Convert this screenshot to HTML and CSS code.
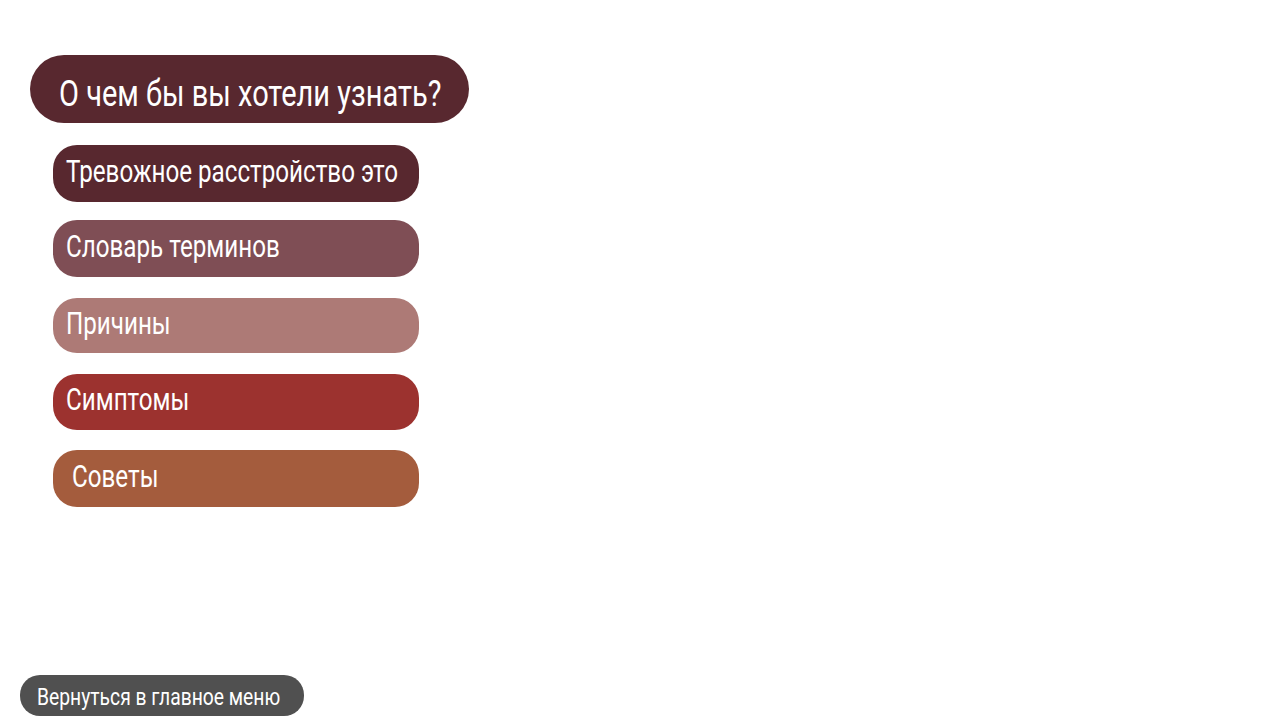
FILE: index.html
```html
<!DOCTYPE html>
<html lang="ru">
<head>
<meta charset="utf-8">
<title>Меню</title>
<link rel="stylesheet" href="styles.css">
</head>
<body>
<div class="page">
  <div class="menu">
    <div class="title"><span class="txt">О чем бы вы хотели узнать?</span></div>
    <div class="list">
      <div class="item c1"><span class="txt">Тревожное расстройство это</span></div>
      <div class="item c2"><span class="txt">Словарь терминов</span></div>
      <div class="item c3"><span class="txt">Причины</span></div>
      <div class="item c4"><span class="txt">Симптомы</span></div>
      <div class="item c5 indent"><span class="txt">Советы</span></div>
    </div>
  </div>
  <div class="back"><span class="txt">Вернуться в главное меню</span></div>
</div>
</body>
</html>
```
FILE: styles.css
```css
html, body {
  margin: 0;
  padding: 0;
  background: #ffffff;
}
.page {
  height: 726px;
  display: flex;
  flex-direction: column;
  font-family: Roboto, "Noto Sans", sans-serif;
  font-weight: 400;
  color: #ffffff;
}
.txt {
  display: inline-block;
  white-space: nowrap;
}
.menu {
  display: flex;
  flex-direction: column;
  padding: 55px 0 0 30px;
}
.title {
  width: 439px;
  height: 68px;
  box-sizing: border-box;
  border-radius: 34px;
  background: #58282f;
  display: flex;
  align-items: center;
  padding-left: 29px;
  font-size: 29px;
}
.title .txt {
  transform: translateY(4px) scaleY(1.28);
}
.list {
  display: flex;
  flex-direction: column;
  margin: 22px 0 0 23px;
}
.item {
  width: 366px;
  height: 57px;
  box-sizing: border-box;
  border-radius: 24px;
  display: flex;
  align-items: center;
  padding-left: 13px;
  font-size: 24.2px;
  margin-bottom: 19px;
}
.item .txt {
  transform: translateY(-2px) scaleY(1.3);
}
.c2 { margin-top: -1px; }
.c3 { margin-top: 2px; height: 55px; }
.c4 { margin-top: 2px; height: 56px; }
.c5 { margin-top: 1px; }
.indent { padding-left: 19px; }
.c1 { background: #58282f; }
.c2 { background: #7f4e55; }
.c3 { background: #ad7a76; }
.c4 { background: #9c322f; }
.c5 { background: #a45c3d; }
.back {
  margin: auto 0 10px 20px;
  width: 284px;
  height: 41px;
  box-sizing: border-box;
  border-radius: 20px;
  background: #505050;
  display: flex;
  align-items: center;
  padding-left: 17px;
  font-size: 19.3px;
}
.back .txt {
  transform: translateY(1px) scaleY(1.28);
}
```
